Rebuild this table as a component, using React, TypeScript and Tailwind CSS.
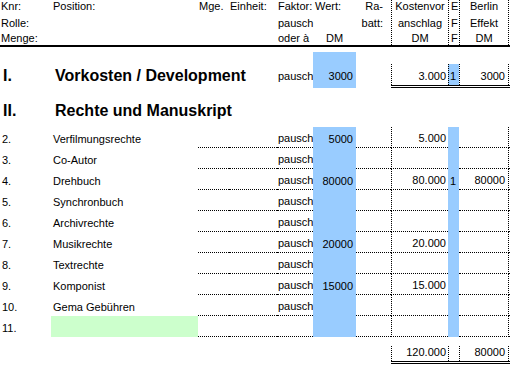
type Pos = {
  nr: string;
  name: string;
  wert?: string;
  kosten?: string;
  ef?: string;
  berlin?: string;
  pausch?: boolean;
  green?: boolean;
};

const positions: Pos[] = [
  { nr: "2.", name: "Verfilmungsrechte", wert: "5000", kosten: "5.000", pausch: true },
  { nr: "3.", name: "Co-Autor", pausch: true },
  { nr: "4.", name: "Drehbuch", wert: "80000", kosten: "80.000", ef: "1", berlin: "80000", pausch: true },
  { nr: "5.", name: "Synchronbuch", pausch: true },
  { nr: "6.", name: "Archivrechte", pausch: true },
  { nr: "7.", name: "Musikrechte", wert: "20000", kosten: "20.000", pausch: true },
  { nr: "8.", name: "Textrechte", pausch: true },
  { nr: "9.", name: "Komponist", wert: "15000", kosten: "15.000", pausch: true },
  { nr: "10.", name: "Gema Gebühren", pausch: true },
  { nr: "11.", name: "", green: true },
];

const txt = "flex items-end whitespace-nowrap leading-[13px] pb-[2px]";
const dot = "border-dotted border-black";

function HeadCol({ lines, className = "" }: { lines: string[]; className?: string }) {
  const heights = ["h-[13px]", "h-[17px]", "h-[15px]"];
  return (
    <div className={`flex h-full flex-col ${className}`}>
      {lines.map((line, i) => (
        <div key={i} className={`flex items-end whitespace-nowrap leading-[13px] ${heights[i]}`}>
          <span className="w-full">{line}</span>
        </div>
      ))}
    </div>
  );
}

function Header() {
  return (
    <div className="flex h-[47px] border-b-2 border-black">
      <HeadCol lines={["Knr:", "Rolle:", "Menge:"]} className="w-[51px] pl-[1px]" />
      <HeadCol lines={["Position:", "", ""]} className="w-[147px] pl-[2px]" />
      <HeadCol lines={["Mge.", "", ""]} className="w-[31px] pl-[1px]" />
      <HeadCol lines={["Einheit:", "", ""]} className="w-[48px] pl-[1px]" />
      <HeadCol lines={["Faktor:", "pausch", "oder à"]} className="w-[36px] pl-[1px]" />
      <div className="flex h-full w-[43px] flex-col">
        <div className="flex h-[13px] items-end pl-[2px] leading-[13px]">Wert:</div>
        <div className="h-[17px]" />
        <div className="flex h-[15px] items-end justify-center leading-[13px]">DM</div>
      </div>
      <HeadCol lines={["Ra-", "batt:", ""]} className="w-[35px] pr-[8px] text-right" />
      <HeadCol lines={["Kostenvor", "anschlag", "DM"]} className={`w-[57px] border-l text-center ${dot}`} />
      <HeadCol lines={["E", "F", "F"]} className={`w-[11px] border-l pl-[2px] ${dot}`} />
      <HeadCol lines={["Berlin", "Effekt", "DM"]} className={`w-[50px] border-x text-center ${dot}`} />
    </div>
  );
}

function SectionOne() {
  return (
    <div>
      <div className="h-[5px]" />
      <div className="flex h-[12px]">
        <div className="w-[313px]" />
        <div className="w-[43px] bg-[#99ccff]" />
      </div>
      <div className="flex h-[21px]">
        <div className="flex w-[51px] items-end pb-[1px] pl-[3px] text-[16px] font-bold leading-[16px]">I.</div>
        <div className="flex w-[226px] items-end whitespace-nowrap pb-[1px] pl-[4px] text-[16px] font-bold leading-[16px]">
          Vorkosten / Development
        </div>
        <div className={`w-[36px] pl-[1px] ${txt}`}>pausch</div>
        <div className={`w-[43px] justify-end bg-[#99ccff] pr-[3px] ${txt}`}>3000</div>
        <div className="w-[35px]" />
        <div className={`w-[57px] justify-end border-l pr-[2px] ${txt} ${dot}`}>3.000</div>
        <div className={`w-[11px] border-l bg-[#99ccff] pl-[1px] ${txt} ${dot}`}>1</div>
        <div className={`w-[50px] justify-end border-x pr-[3px] ${txt} ${dot}`}>3000</div>
      </div>
      <div className="flex h-[3px]">
        <div className="w-[313px]" />
        <div className="w-[43px] bg-[#99ccff]" />
        <div className="w-[35px]" />
        <div className="flex-1 border-b-[3px] border-double border-black" />
      </div>
    </div>
  );
}

function SectionTwo() {
  return (
    <div className="flex h-[39px] items-start pt-[17px]">
      <div className="w-[51px] pl-[3px] text-[16px] font-bold leading-[12px]">II.</div>
      <div className="whitespace-nowrap pl-[4px] text-[16px] font-bold leading-[12px]">Rechte und Manuskript</div>
    </div>
  );
}

function PosRow({ p }: { p: Pos }) {
  return (
    <div className="flex h-[21px]">
      <div className={`w-[51px] pl-[2px] ${txt}`}>{p.nr}</div>
      <div className={`w-[147px] pl-[2px] ${txt} ${p.green ? "bg-[#ccffcc]" : ""}`}>{p.name}</div>
      <div className={`w-[31px] border-b ${dot}`} />
      <div className={`w-[48px] border-b ${dot}`} />
      <div className={`w-[36px] border-b pl-[1px] ${txt} ${dot}`}>{p.pausch ? "pausch" : ""}</div>
      <div className={`w-[43px] justify-end bg-[#99ccff] pr-[3px] ${txt}`}>{p.wert}</div>
      <div className={`w-[35px] border-b ${dot}`} />
      <div className={`w-[57px] justify-end border-b border-l pr-[2px] ${txt} ${dot}`}>{p.kosten}</div>
      <div className={`w-[11px] bg-[#99ccff] pl-[2px] ${txt}`}>{p.ef}</div>
      <div className={`w-[50px] justify-end border-b border-r pr-[3px] ${txt} ${dot}`}>{p.berlin}</div>
      <div className={`flex-1 border-b ${dot}`} />
    </div>
  );
}

function Totals() {
  return (
    <div className="flex h-[15px] pl-[391px]">
      <div className={`w-[57px] justify-end border-l pr-[2px] ${txt} ${dot}`}>120.000</div>
      <div className={`w-[11px] border-l ${dot}`} />
      <div className={`w-[50px] justify-end border-x pr-[3px] ${txt} ${dot}`}>80000</div>
    </div>
  );
}

export default function App() {
  return (
    <div className="h-[367px] w-[510px] overflow-hidden bg-white font-['Liberation_Sans',Arial,sans-serif] text-[11px] text-black">
      <Header />
      <SectionOne />
      <SectionTwo />
      {positions.map((p) => (
        <PosRow key={p.nr} p={p} />
      ))}
      <div className="h-[9px]" />
      <Totals />
      <div className="ml-[391px] h-[3px] border-b-[3px] border-double border-black" />
    </div>
  );
}
